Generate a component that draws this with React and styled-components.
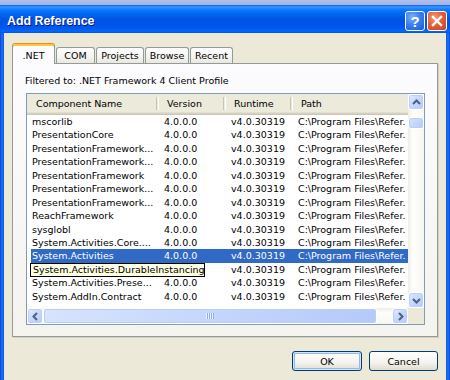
import React from "react";
import styled, { createGlobalStyle, css } from "styled-components";

const GlobalStyle = createGlobalStyle`
  html, body { margin: 0; padding: 0; }
  body {
    width: 450px;
    height: 380px;
    overflow: hidden;
    background: #ece9d8;
    font-family: "DejaVu Sans", Verdana, sans-serif;
    font-size: 9.5px;
    color: #000;
  }
`;

const COLS = "131px 67px 67px 1fr";
const ROW_H = 13.45;

const rows = [
  { name: "mscorlib" },
  { name: "PresentationCore" },
  { name: "PresentationFramework..." },
  { name: "PresentationFramework..." },
  { name: "PresentationFramework" },
  { name: "PresentationFramework..." },
  { name: "PresentationFramework..." },
  { name: "ReachFramework" },
  { name: "sysglobl" },
  { name: "System.Activities.Core...." },
  { name: "System.Activities", selected: true },
  { name: "System.Activities.DurableInstancing", covered: true },
  { name: "System.Activities.Prese..." },
  { name: "System.AddIn.Contract" },
];

const Window = styled.div`
  width: 450px;
  height: 380px;
  display: flex;
  flex-direction: column;
  overflow: hidden;
`;

const TopEdge = styled.div`
  height: 5px;
  flex: none;
  background: linear-gradient(#b3c0e8, #9fb2e4);
`;

const TitleBar = styled.div`
  height: 28px;
  flex: none;
  display: flex;
  align-items: flex-start;
  padding: 0 3px 0 7px;
  background: linear-gradient(
    to bottom,
    #0058ee 0%,
    #3a93ff 6%,
    #288eff 10%,
    #127dff 16%,
    #036ffc 24%,
    #0262ee 36%,
    #0057e5 48%,
    #0054e3 60%,
    #0055eb 76%,
    #005bf5 86%,
    #026afe 92%,
    #0062ef 96%,
    #0052d6 100%
  );
`;

const Title = styled.div`
  margin-top: 9px;
  font-family: "Liberation Sans", Arial, sans-serif;
  font-weight: bold;
  font-size: 12.4px;
  line-height: 14px;
  color: #fff;
  text-shadow: 1px 1px 0 #0a1883;
`;

const CaptionButtons = styled.div`
  margin-left: auto;
  margin-top: 6px;
  display: flex;
  gap: 2px;
`;

const CaptionButton = styled.div`
  box-sizing: border-box;
  width: 20px;
  height: 20px;
  border: 1px solid #fff;
  border-radius: 3px;
  display: flex;
  align-items: center;
  justify-content: center;
  color: #fff;
  font-family: "Liberation Sans", Arial, sans-serif;
  font-weight: bold;
  font-size: 15px;
  line-height: 1;
  ${(p) =>
    p.$kind === "close"
      ? css`
          background: radial-gradient(circle at 35% 30%, #f19a7c 0%, #e35f38 45%, #cc4216 100%);
        `
      : css`
          background: radial-gradient(circle at 35% 30%, #7fb0ff 0%, #3b7ff0 45%, #1e58d8 100%);
        `}
`;

const FrameBody = styled.div`
  flex: 1;
  display: flex;
  padding: 0 4px;
  background: linear-gradient(to right, #0831d9 0, #166aee 1px, #166aee 3px, #0855dd 4px, #0855dd 446px, #166aee 447px, #166aee 449px, #0831d9 450px);
`;

const Client = styled.div`
  flex: 1;
  display: flex;
  flex-direction: column;
  padding: 10px 8px 0;
  background: #ece9d8;
`;

const TabStrip = styled.div`
  height: 21px;
  display: flex;
  align-items: flex-end;
  gap: 1px;
  margin-bottom: -1px;
  position: relative;
  z-index: 1;
`;

const Tab = styled.div`
  box-sizing: border-box;
  width: ${(p) => p.$w}px;
  display: flex;
  align-items: center;
  justify-content: center;
  border: 1px solid #919b9c;
  border-bottom: none;
  border-radius: 3px 3px 0 0;
  ${(p) =>
    p.$active
      ? css`
          height: 21px;
          padding-top: 2px;
          background: #fcfcfe;
          border-top: 1px solid #e68b2c;
          box-shadow: inset 0 2px 0 #ffc73c;
        `
      : css`
          height: 16px;
          margin-bottom: 1px;
          background: linear-gradient(#fefefe, #f6f5f1 55%, #e9e7de);
        `}
`;

const Panel = styled.div`
  box-sizing: border-box;
  height: 274px;
  flex: none;
  display: flex;
  flex-direction: column;
  padding: 10px 12px 0 13px;
  border: 1px solid #919b9c;
  background: linear-gradient(#fcfcfe, #f4f3ee);
  box-shadow: 1px 1px 0 #d3d0c1;
`;

const FilterLabel = styled.div`
  line-height: 13px;
  margin-left: -1px;
`;

const ListView = styled.div`
  box-sizing: border-box;
  margin-top: 6px;
  height: 232px;
  border: 1px solid #7f9db9;
  background: #fff;
  display: grid;
  grid-template-columns: 1fr 16px;
  grid-template-rows: 1fr 16px;
`;

const ListContent = styled.div`
  position: relative;
  overflow: hidden;
`;

const Header = styled.div`
  display: grid;
  grid-template-columns: ${COLS};
  height: 21px;
  background: #ebeadb;
  box-shadow: inset 0 -1px 0 #cbc7b8, inset 0 -2px 0 #d6d2c2, inset 0 -3px 0 #e2decd;
`;

const HeaderCell = styled.div`
  position: relative;
  padding-left: 9px;
  line-height: 20px;
  white-space: nowrap;
  ${(p) =>
    !p.$last &&
    css`
      &::after {
        content: "";
        position: absolute;
        right: -1px;
        top: 3px;
        bottom: 5px;
        width: 1px;
        border-left: 1px solid #c7c5b2;
        border-right: 1px solid #fff;
      }
    `}
`;

const Row = styled.div`
  display: grid;
  grid-template-columns: ${COLS};
  height: ${ROW_H}px;
  line-height: ${ROW_H}px;
  ${(p) =>
    p.$selected &&
    css`
      color: #fff;
      background: linear-gradient(to right, transparent 4px, #316ac5 4px);
    `}
`;

const Cell = styled.div`
  padding-left: ${(p) => (p.$first ? 5 : 6)}px;
  white-space: nowrap;
  overflow: hidden;
  ${(p) => p.$hidden && css`visibility: hidden;`}
`;

const Tooltip = styled.div`
  position: absolute;
  left: 3px;
  top: 169px;
  box-sizing: border-box;
  width: 175px;
  height: 14px;
  padding: 0 2px;
  line-height: 12px;
  background: #ffffe1;
  border: 1px solid #000;
  white-space: nowrap;
`;

const VScroll = styled.div`
  display: flex;
  flex-direction: column;
  background: linear-gradient(to right, #eeede5, #fefefe 30%, #f7f6f1);
`;

const HScrollBar = styled.div`
  display: flex;
  background: linear-gradient(to bottom, #eeede5, #fefefe 30%, #f7f6f1);
`;

const Corner = styled.div`
  background: #ece9d8;
`;

const ScrollButton = styled.div`
  box-sizing: border-box;
  width: 16px;
  height: 16px;
  flex: none;
  display: flex;
  align-items: center;
  justify-content: center;
  border: 1px solid #fff;
  border-radius: 3px;
  background: linear-gradient(135deg, #e3ebfe 0%, #c9d8fd 45%, #b6cafa 100%);
  box-shadow: inset 0 0 0 1px #bccff8;
  ${(p) => p.$end && css`margin-top: auto;`}
`;

const Thumb = styled.div`
  box-sizing: border-box;
  flex: none;
  position: relative;
  border: 1px solid #fff;
  border-radius: 3px;
  background: linear-gradient(135deg, #d8e4fe 0%, #c5d6fc 50%, #b5c9f9 100%);
  box-shadow: inset 0 0 0 1px #b9cdf8;
  ${(p) =>
    p.$horizontal
      ? css`
          width: ${p.$size}px;
          height: 16px;
          &::after {
            content: "";
            position: absolute;
            left: 50%;
            top: 4px;
            width: 8px;
            height: 6px;
            margin-left: -4px;
            background: repeating-linear-gradient(to right, #eef4fe 0 1px, #8caaf0 1px 2px);
          }
        `
      : css`
          height: ${p.$size}px;
          width: 16px;
          margin-top: 7px;
        `}
`;

const TrackRest = styled.div`
  flex: 1;
`;

const ButtonRow = styled.div`
  display: flex;
  justify-content: flex-end;
  gap: 7px;
  margin-top: 14px;
`;

const PushButton = styled.div`
  box-sizing: border-box;
  width: ${(p) => p.$w}px;
  height: 20px;
  display: flex;
  align-items: center;
  justify-content: center;
  border: 1px solid #003c74;
  border-radius: 3px;
  background: linear-gradient(#ffffff, #f5f4ef 55%, #e6e3d8 88%, #d6d0c5);
  ${(p) =>
    p.$default
      ? css`
          box-shadow: inset 0 0 0 1px #cee7ff, inset 0 0 0 2px #98b8ea;
        `
      : css`
          box-shadow: inset 0 -2px 0 #e3e0d3;
        `}
`;

function Chevron({ dir }) {
  const pts = {
    up: "1,6 4.5,2.5 8,6",
    down: "1,3 4.5,6.5 8,3",
    left: "6,1 2.5,4.5 6,8",
    right: "3,1 6.5,4.5 3,8",
  }[dir];
  return (
    <svg width="9" height="9" viewBox="0 0 9 9">
      <polyline points={pts} fill="none" stroke="#4d6185" strokeWidth="2" />
    </svg>
  );
}

function CloseGlyph() {
  return (
    <svg width="12" height="12" viewBox="0 0 12 12">
      <path d="M2 2 L10 10 M10 2 L2 10" stroke="#fff" strokeWidth="2.4" strokeLinecap="square" />
    </svg>
  );
}

export default function App() {
  return (
    <Window>
      <GlobalStyle />
      <TopEdge />
      <TitleBar>
        <Title>Add Reference</Title>
        <CaptionButtons>
          <CaptionButton $kind="help">?</CaptionButton>
          <CaptionButton $kind="close">
            <CloseGlyph />
          </CaptionButton>
        </CaptionButtons>
      </TitleBar>
      <FrameBody>
        <Client>
          <TabStrip>
            <Tab $w={43} $active>.NET</Tab>
            <Tab $w={39}>COM</Tab>
            <Tab $w={48}>Projects</Tab>
            <Tab $w={44}>Browse</Tab>
            <Tab $w={43}>Recent</Tab>
          </TabStrip>
          <Panel>
            <FilterLabel>Filtered to: .NET Framework 4 Client Profile</FilterLabel>
            <ListView>
              <ListContent>
                <Header>
                  <HeaderCell>Component Name</HeaderCell>
                  <HeaderCell>Version</HeaderCell>
                  <HeaderCell>Runtime</HeaderCell>
                  <HeaderCell $last>Path</HeaderCell>
                </Header>
                {rows.map((r, i) => (
                  <Row key={i} $selected={r.selected}>
                    <Cell $first $hidden={r.covered}>{r.name}</Cell>
                    <Cell $hidden={r.covered}>4.0.0.0</Cell>
                    <Cell>v4.0.30319</Cell>
                    <Cell>C:\Program Files\Refer.</Cell>
                  </Row>
                ))}
                <Tooltip>System.Activities.DurableInstancing</Tooltip>
              </ListContent>
              <VScroll>
                <ScrollButton>
                  <Chevron dir="up" />
                </ScrollButton>
                <Thumb $size={12} />
                <ScrollButton $end>
                  <Chevron dir="down" />
                </ScrollButton>
              </VScroll>
              <HScrollBar>
                <ScrollButton>
                  <Chevron dir="left" />
                </ScrollButton>
                <Thumb $horizontal $size={334} />
                <TrackRest />
                <ScrollButton>
                  <Chevron dir="right" />
                </ScrollButton>
              </HScrollBar>
              <Corner />
            </ListView>
          </Panel>
          <ButtonRow>
            <PushButton $w={70} $default>OK</PushButton>
            <PushButton $w={69}>Cancel</PushButton>
          </ButtonRow>
        </Client>
      </FrameBody>
    </Window>
  );
}
